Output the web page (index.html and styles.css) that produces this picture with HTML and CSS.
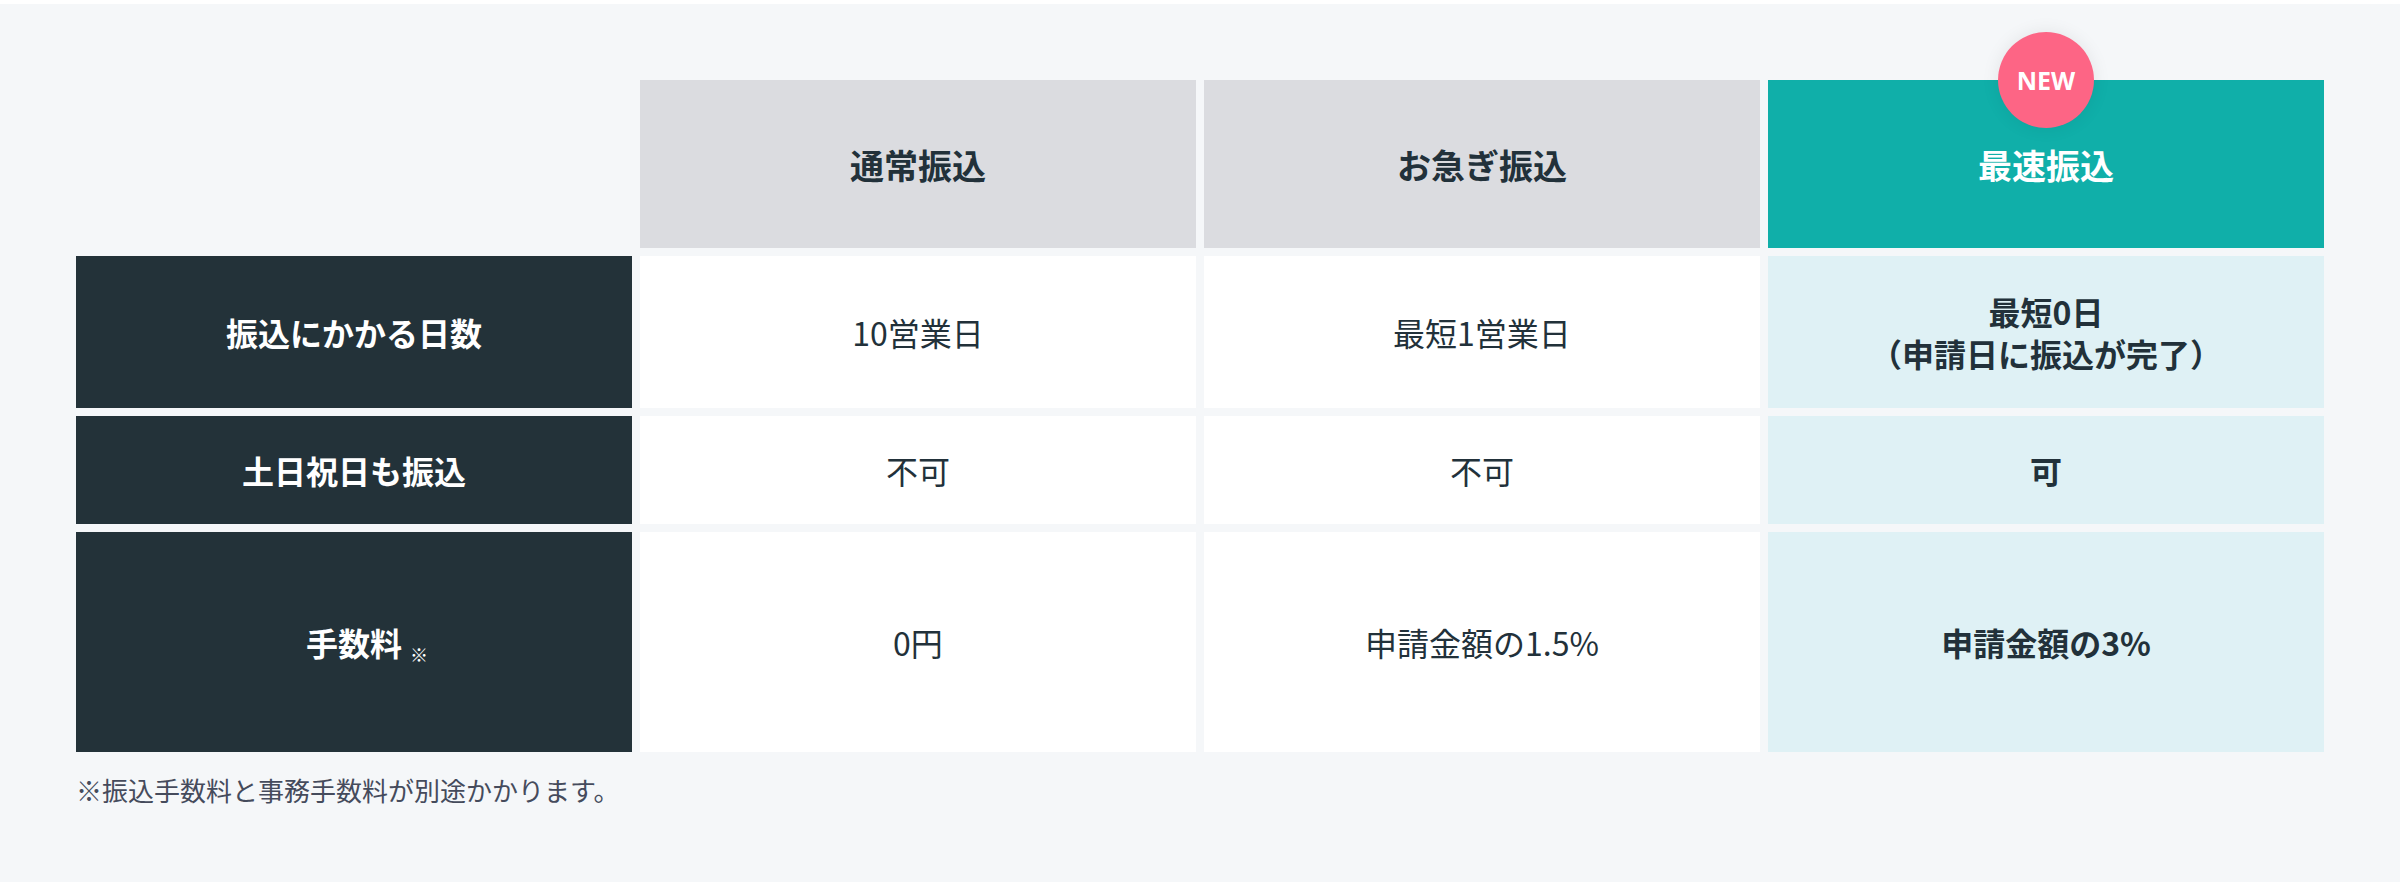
FILE: index.html
```html
<!DOCTYPE html>
<html lang="ja">
<head>
<meta charset="utf-8">
<title>振込方法の比較</title>
<link rel="stylesheet" href="styles.css">
</head>
<body>
<section class="compare">
  <div class="table">
    <div class="corner"></div>
    <div class="head">通常振込</div>
    <div class="head">お急ぎ振込</div>
    <div class="head head-fast">
      <span class="badge">NEW</span>
      最速振込
    </div>

    <div class="label">振込にかかる日数</div>
    <div class="cell">10営業日</div>
    <div class="cell">最短1営業日</div>
    <div class="cell cell-fast">最短0日<br>（申請日に振込が完了）</div>

    <div class="label">土日祝日も振込</div>
    <div class="cell">不可</div>
    <div class="cell">不可</div>
    <div class="cell cell-fast">可</div>

    <div class="label"><span class="label-text">手数料<span class="mark">※</span></span></div>
    <div class="cell">0円</div>
    <div class="cell">申請金額の1.5%</div>
    <div class="cell cell-fast">申請金額の3%</div>
  </div>
  <p class="note">※振込手数料と事務手数料が別途かかります。</p>
</section>
</body>
</html>
```

FILE: styles.css
```css
html, body {
  margin: 0;
  padding: 0;
  background: #ffffff;
}

body {
  font-family: "Noto Sans CJK JP", "Noto Sans", sans-serif;
  color: #22313a;
}

.compare {
  margin-top: 4px;
  background: #f5f7f9;
  padding: 76px 76px 60px;
  min-height: 878px;
  box-sizing: border-box;
}

.table {
  display: grid;
  grid-template-columns: repeat(4, 1fr);
  grid-template-rows: 168px 152px 108px 220px;
  gap: 8px;
}

.head,
.label,
.cell {
  display: flex;
  align-items: center;
  justify-content: center;
  text-align: center;
}

.head {
  background: #dbdce0;
  font-size: 34px;
  font-weight: 700;
  color: #22313a;
  position: relative;
}

.head-fast {
  background: #10afa9;
  color: #ffffff;
}

.badge {
  position: absolute;
  left: 50%;
  top: -48px;
  margin-left: -48px;
  width: 96px;
  height: 96px;
  border-radius: 50%;
  background: #fd6585;
  color: #ffffff;
  font-family: "Noto Sans", sans-serif;
  font-size: 25px;
  font-weight: 700;
  display: flex;
  align-items: center;
  justify-content: center;
  box-shadow: 0 0 18px rgba(0, 0, 0, 0.08);
}

.label {
  background: #233239;
  color: #ffffff;
  font-size: 32px;
  font-weight: 700;
}

.label-text {
  position: relative;
}

.mark {
  position: absolute;
  left: 100%;
  bottom: 2px;
  margin-left: 8px;
  font-size: 18px;
  line-height: 1;
  font-weight: 400;
  white-space: nowrap;
}

.cell {
  background: #ffffff;
  font-size: 32px;
  line-height: 42px;
  color: #22313a;
}

.cell-fast {
  background: #dff1f5;
  font-weight: 700;
}

.note {
  margin: 18px 0 0;
  font-size: 26px;
  line-height: 39px;
  color: #454b5c;
}
```
